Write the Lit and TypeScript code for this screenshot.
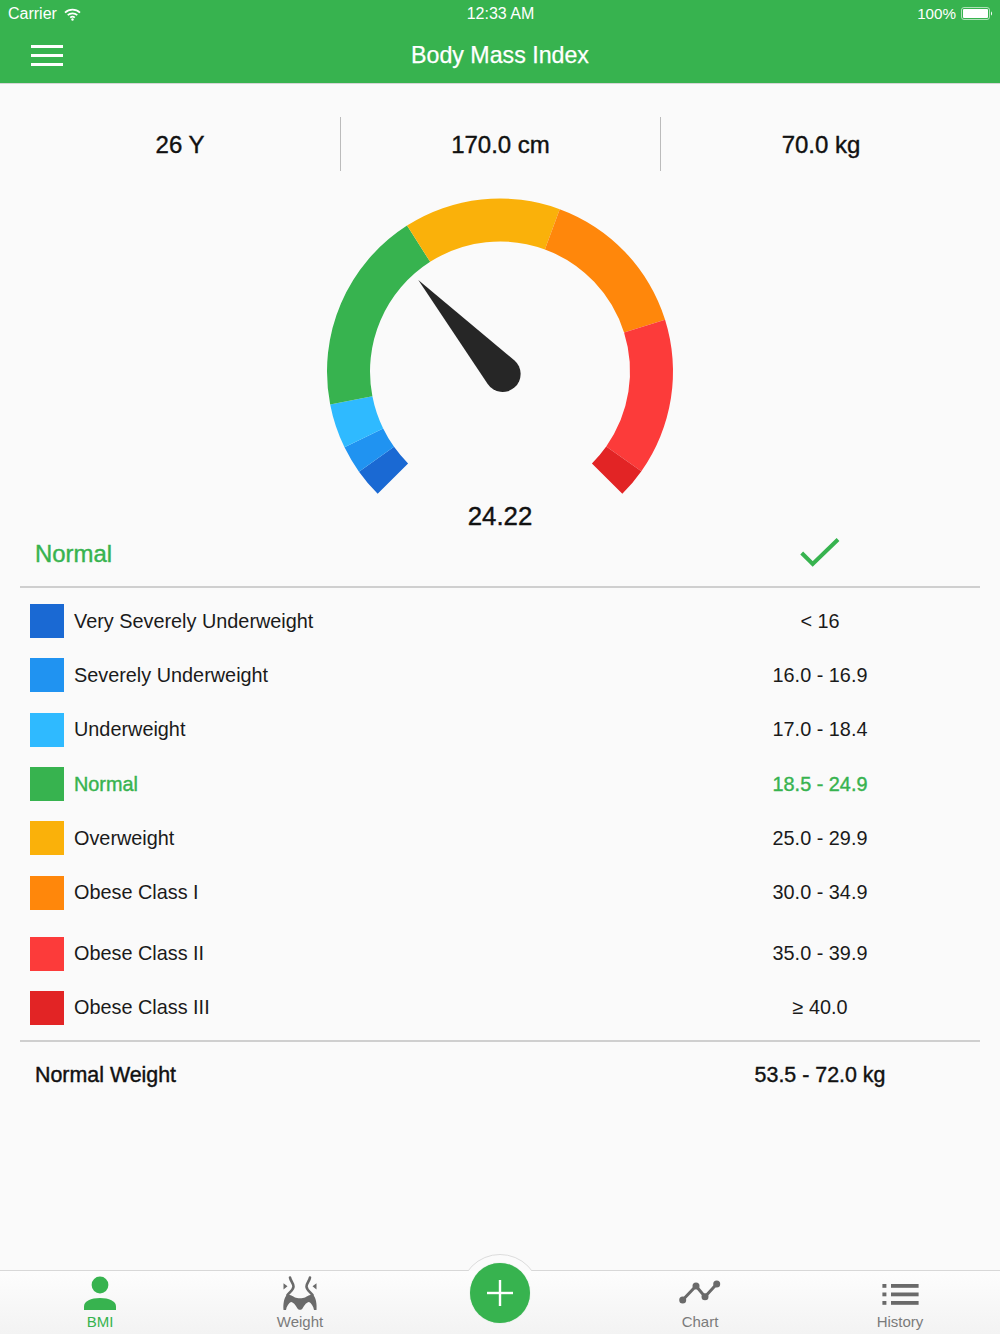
import { LitElement, html, css, svg } from "lit";
import { customElement } from "lit/decorators.js";

const CX = 500, CY = 371.5 - 171, RO = 173, RI = 130;
const segs = [
  [135, 144.6, "#1a69d3"],
  [144.6, 154, "#2093f1"],
  [154, 169, "#2fbaff"],
  [169, 237.5, "#37b34f"],
  [237.5, 290.2, "#fab10a"],
  [290.2, 342.6, "#ff870b"],
  [342.6, 395.2, "#fc3b3a"],
  [395.2, 405, "#e22425"],
] as [number, number, string][];

function pt(r: number, a: number) {
  const t = (a * Math.PI) / 180;
  return `${(CX + r * Math.cos(t)).toFixed(2)} ${(CY + r * Math.sin(t)).toFixed(2)}`;
}
function seg(a: number, b: number) {
  const large = b - a > 180 ? 1 : 0;
  return `M${pt(RO, a)} A${RO} ${RO} 0 ${large} 1 ${pt(RO, b)} L${pt(RI, b)} A${RI} ${RI} 0 ${large} 0 ${pt(RI, a)} Z`;
}

const rows = [
  ["#1a69d3", "Very Severely Underweight", "< 16"],
  ["#2093f1", "Severely Underweight", "16.0 - 16.9"],
  ["#2fbaff", "Underweight", "17.0 - 18.4"],
  ["#37b34f", "Normal", "18.5 - 24.9"],
  ["#fab10a", "Overweight", "25.0 - 29.9"],
  ["#ff870b", "Obese Class I", "30.0 - 34.9"],
  ["#fc3b3a", "Obese Class II", "35.0 - 39.9"],
  ["#e22425", "Obese Class III", "≥ 40.0"],
];

@customElement("app-root")
export class AppRoot extends LitElement {
  static styles = css`
    :host { width: 1000px; height: 1334px; background: #fafafa; overflow: hidden; position: relative;
      font-family: "Liberation Sans", Arial, sans-serif; color: #111; display: flex; flex-direction: column; }
    .head { background: #37b34f; color: #fff; height: 84px; border-bottom: 1px solid #d6d6d6; box-sizing: border-box; flex: none; }
    .status { height: 28px; display: grid; grid-template-columns: 1fr auto 1fr; align-items: center; padding: 0 7px 0 8px; font-size: 16px; }
    .status .l { display: flex; align-items: center; gap: 7px; }
    .status .r { display: flex; align-items: center; justify-content: flex-end; gap: 5px; font-size: 15.2px; padding-bottom: 2px; }
    .nav { height: 54px; display: grid; grid-template-columns: 1fr auto 1fr; align-items: center; padding: 0 31px; font-size: 23.2px; -webkit-text-stroke: 0.25px #fff; }
    .burger { display: flex; flex-direction: column; gap: 6px; width: 32px; }
    .burger i { display: block; height: 3px; background: #fff; }
    .stats { margin-top: 33px; height: 54px; display: grid; grid-template-columns: 340px 321px 339px; flex: none; font-size: 24px; -webkit-text-stroke: 0.4px #111; }
    .stats div { display: flex; align-items: center; justify-content: center; padding-top: 2px; }
    .stats .first { padding-left: 20px; }
    .stats .last { padding-right: 19px; }
    .stats .mid { border-left: 1px solid #bbb; border-right: 1px solid #bbb; }
    .gauge { display: block; width: 1000px; height: 330px; flex: none; }
    .val { text-align: center; font-size: 25.8px; line-height: 30px; height: 32px; flex: none; -webkit-text-stroke: 0.4px #111; }
    .sum { margin: 0 20px; height: 55px; box-sizing: border-box; border-bottom: 2px solid #cfcfcf; display: grid; grid-template-columns: 1fr 320px; flex: none; }
    .sum .name { padding: 0 0 12px 15px; display: flex; align-items: center; color: #37b34f; font-size: 23.9px; -webkit-text-stroke: 0.4px #37b34f; }
    .sum .chk { display: flex; justify-content: center; padding-top: 3px; }
    .list { padding: 6px 0 5px; flex: none; }
    .row { height: 54.33px; display: grid; grid-template-columns: 34px 1fr 320px; column-gap: 10px; align-items: center; margin: 0 20px 0 30px; font-size: 19.85px; color: #1a1a1a; }
    .row.wide { margin-top: 6.5px; }
    .sw { width: 34px; height: 34px; }
    .row .v { text-align: center; }
    .row.on { color: #37b34f; -webkit-text-stroke: 0.4px #37b34f; }
    .rule { margin: 0 20px; border-top: 2px solid #cfcfcf; flex: none; }
    .foot { margin: 0 20px; padding-left: 15px; height: 66px; display: grid; grid-template-columns: 1fr 320px; align-items: center; font-size: 21.4px; flex: none; -webkit-text-stroke: 0.4px #111; }
    .foot .v { text-align: center; }
    .spacer { flex: 1; }
    .tabs { position: relative; height: 64px; flex: none; border-top: 1px solid #d8d8d8; box-sizing: border-box; background: linear-gradient(#fdfdfd, #f3f3f3); display: grid; grid-template-columns: repeat(5, 1fr); }
    .tab { display: flex; flex-direction: column; align-items: center; color: #7b7b7b; font-size: 15px; position: relative; }
    .tab svg { display: block; width: 44px; height: 36px; margin-top: 4px; }
    .tab span { line-height: 18px; margin-top: 2px; }
    .tab.on { color: #37b34f; }
    .bump { position: absolute; left: 460px; top: -17px; width: 80px; height: 80px; box-sizing: border-box; border-radius: 50%; border: 1px solid #dcdcdc; background: #fbfbfb; clip-path: inset(0 0 63px 0); }
    .add { position: absolute; left: 470px; top: -8px; width: 60px; height: 60px; border-radius: 50%; background: #37b34f; display: flex; align-items: center; justify-content: center; box-shadow: 0 0 1px #9ad3a6; }
  `;

  render() {
    return html`
      <div class="head">
        <div class="status">
          <div class="l">Carrier
            <svg width="17" height="13" viewBox="0 0 17 13" fill="none" stroke="#fff" stroke-width="1.7">
              <path d="M1 4.6C5.2 .7 11.8 .7 16 4.6" /><path d="M3.7 7.2C6.4 4.8 10.6 4.8 13.3 7.2" /><path d="M6.2 9.6C7.5 8.5 9.5 8.5 10.8 9.6" />
              <circle cx="8.5" cy="11.5" r="1.2" fill="#fff" stroke="none" />
            </svg>
          </div>
          <div>12:33 AM</div>
          <div class="r">100%
            <svg width="32" height="13" viewBox="0 0 32 13">
              <rect x=".5" y=".5" width="28" height="12" rx="2.5" fill="none" stroke="#fff" stroke-opacity=".6" />
              <rect x="2" y="2" width="25" height="9" rx="1" fill="#fff" />
              <path d="M30 4.5c1.3 .3 1.3 3.7 0 4z" fill="#fff" />
            </svg>
          </div>
        </div>
        <div class="nav">
          <div class="burger"><i></i><i></i><i></i></div>
          <div>Body Mass Index</div>
          <div></div>
        </div>
      </div>

      <div class="stats">
        <div class="first">26 Y</div>
        <div class="mid">170.0 cm</div>
        <div class="last">70.0 kg</div>
      </div>

      <svg class="gauge" viewBox="0 0 1000 330">
        ${segs.map(([a, b, c]) => svg`<path d=${seg(a, b)} fill=${c} />`)}
        <path d="M418.3 109 L514.25 189.2 A18 18 0 1 1 487.7 213 Z" fill="#262626" />
      </svg>

      <div class="val">24.22</div>

      <div class="sum">
        <div class="name">Normal</div>
        <div class="chk">
          <svg width="42" height="34" viewBox="0 0 42 34" fill="none" stroke="#37b34f" stroke-width="4">
            <path d="M2.700 17L13.700 28L39 3.500" />
          </svg>
        </div>
      </div>

      <div class="list">
        ${rows.map(([c, n, v], i) => html`
          <div class="row ${i === 3 ? "on" : ""} ${i === 6 ? "wide" : ""}">
            <div class="sw" style="background:${c}"></div>
            <div>${n}</div>
            <div class="v">${v}</div>
          </div>`)}
      </div>
      <div class="rule"></div>
      <div class="foot">
        <div>Normal Weight</div>
        <div class="v">53.5 - 72.0 kg</div>
      </div>
      <div class="spacer"></div>

      <div class="tabs">
        <div class="bump"></div>
        <div class="tab on">
          <svg viewBox="0 0 44 36" fill="#37b34f">
            <circle cx="22" cy="10" r="8.4" />
            <path d="M6 35v-3.5C6 26 13 23 22 23s16 3 16 8.500V35z" />
          </svg>
          <span>BMI</span>
        </div>
        <div class="tab">
          <svg viewBox="0 0 44 36" fill="#6a6a6a">
            <path d="M12 2.500C12.500 6 15.500 8 15.500 11.500C15.500 15 11.500 17 9.500 20" fill="none" stroke="#6a6a6a" stroke-width="2.600" stroke-linecap="round" />
            <path d="M32 2.500C31.500 6 28.500 8 28.500 11.500C28.500 15 32.500 17 34.500 20" fill="none" stroke="#6a6a6a" stroke-width="2.600" stroke-linecap="round" />
            <path d="M5.500 8.300L9.500 11.300L5.500 14.500z M38.500 8.300L34.500 11.300L38.500 14.500z" />
            <path d="M9 19.500C12 19.500 15 21 17 22.500C19 23.500 25 23.500 27 22.500C29 21 32 19.500 35 19.500C38 23 39 29 38.500 35H36C35.500 31 33 28 31 27C28 27.500 26 31 24.500 33.500C23.500 35.300 20.500 35.300 19.500 33.500C18 31 16 27.500 13 27C11 28 8.500 31 8 35H5.500C5 29 6 23 9 19.500Z" />
          </svg>
          <span>Weight</span>
        </div>
        <div class="tab"></div>
        <div class="tab">
          <svg viewBox="0 0 44 36">
            <path d="M4.700 25L18 11L27 21.700L38.700 9" fill="none" stroke="#6a6a6a" stroke-width="3" />
            <g fill="#6a6a6a"><circle cx="4.700" cy="25" r="3.500" /><circle cx="18" cy="11" r="3.500" /><circle cx="27" cy="21.700" r="3.500" /><circle cx="38.700" cy="9" r="3.500" /></g>
          </svg>
          <span>Chart</span>
        </div>
        <div class="tab">
          <svg viewBox="0 0 44 36" fill="#6a6a6a">
            <rect x="4.400" y="9" width="4" height="3.800" />
            <rect x="13" y="9" width="27.600" height="3.800" />
            <rect x="4.400" y="17.500" width="4" height="3.800" /><rect x="13" y="17.500" width="27.600" height="3.800" />
            <rect x="4.400" y="26" width="4" height="3.800" /><rect x="13" y="26" width="27.600" height="3.800" />
          </svg>
          <span>History</span>
        </div>
        <div class="add">
          <svg width="26" height="26" viewBox="0 0 26 26" fill="#fff"><rect x="11.800" y="0" width="2.400" height="26" /><rect x="0" y="11.800" width="26" height="2.400" /></svg>
        </div>
      </div>
    `;
  }
}
